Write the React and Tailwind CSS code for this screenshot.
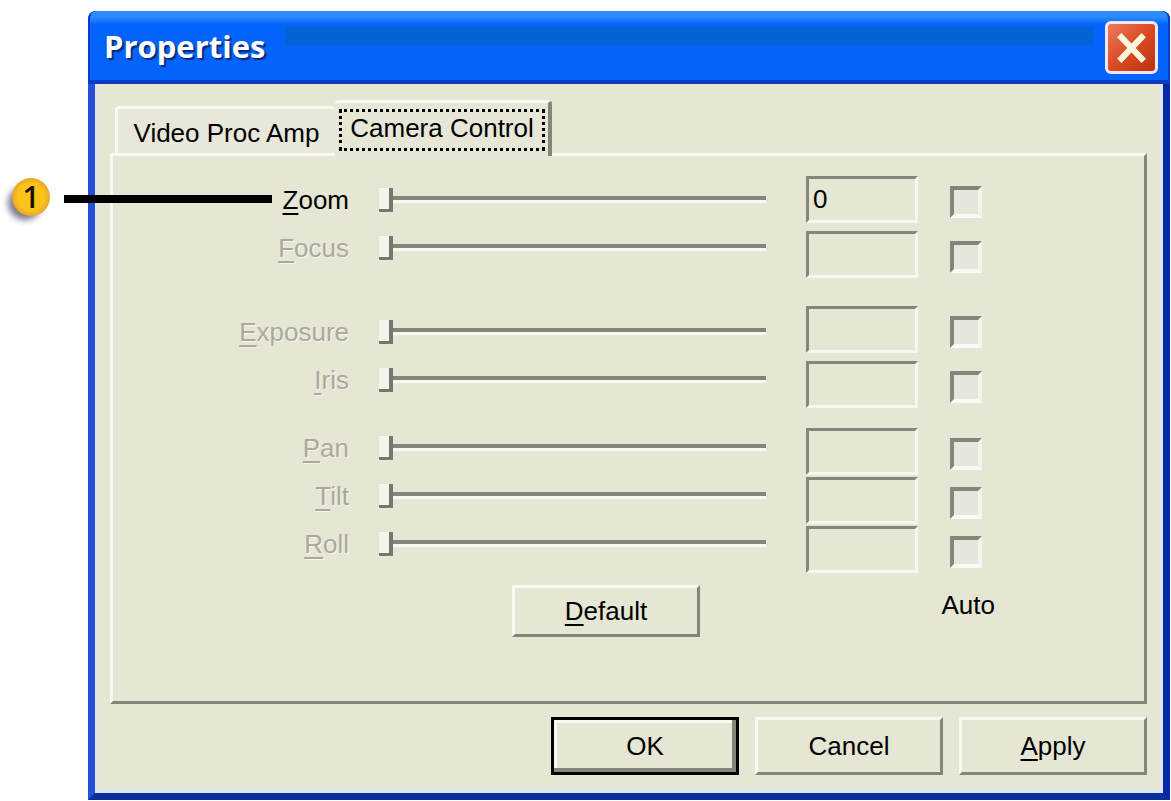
import React from "react";

const GROUPS = [
  [
    { id: "zoom", label: "Zoom", value: "0", enabled: true },
    { id: "focus", label: "Focus", value: "" },
  ],
  [
    { id: "exposure", label: "Exposure", value: "" },
    { id: "iris", label: "Iris", value: "" },
  ],
  [
    { id: "pan", label: "Pan", value: "" },
    { id: "tilt", label: "Tilt", value: "" },
    { id: "roll", label: "Roll", value: "" },
  ],
];

const LEFT_GAPS = ["", "mt-9", "mt-5"];
const RIGHT_GAPS = ["", "mt-7", "mt-5"];
const RIGHT_STEPS = ["gap-2", "gap-2", "gap-0.5"];

function Mnemonic({ text }) {
  return (
    <span>
      <span className="underline decoration-2 underline-offset-4">{text[0]}</span>
      {text.slice(1)}
    </span>
  );
}

function SliderRow({ item }) {
  return (
    <div className="flex h-12 items-center">
      <label
        htmlFor={item.id}
        className={
          item.enabled
            ? "w-[236px] shrink-0 text-right text-black"
            : "w-[236px] shrink-0 text-right text-[#aaa99c] [text-shadow:1px_1px_0_#f6f6ee]"
        }
      >
        <Mnemonic text={item.label} />
      </label>
      <input
        id={item.id}
        type="range"
        min="0"
        max="100"
        defaultValue="0"
        disabled={!item.enabled}
        className="ml-[30px] h-7 min-w-0 flex-1 appearance-none bg-transparent [background:linear-gradient(to_bottom,transparent_10px,#85857a_10px,#85857a_14px,#f8f8f2_14px,#f8f8f2_17px,transparent_17px)] [&::-webkit-slider-thumb]:h-6 [&::-webkit-slider-thumb]:w-[14px] [&::-webkit-slider-thumb]:appearance-none [&::-webkit-slider-thumb]:border-b-[3px] [&::-webkit-slider-thumb]:border-r-4 [&::-webkit-slider-thumb]:border-[#77776c] [&::-webkit-slider-thumb]:bg-[#f4f4ec]"
      />
    </div>
  );
}

function ValueRow({ item }) {
  return (
    <div className="flex items-center gap-8">
      <input
        type="text"
        aria-label={item.label + " value"}
        defaultValue={item.value}
        disabled={!item.enabled}
        className="h-[47px] w-[112px] border-[3px] border-b-[#f7f7ee] border-l-[#85857a] border-r-[#f7f7ee] border-t-[#85857a] bg-transparent px-1 text-black outline-none"
      />
      <input
        type="checkbox"
        aria-label={item.label + " auto"}
        disabled
        className="mt-1 h-8 w-8 appearance-none border-4 border-b-[#f9f9f5] border-l-[#85857a] border-r-[#f4f4ee] border-t-[#85857a] bg-[#e6e6da]"
      />
    </div>
  );
}

const BUTTON =
  "flex items-center justify-center border-[3px] border-b-[#85857a] border-l-[#f9f9f2] border-r-[#85857a] border-t-[#f9f9f2] bg-[#e5e6d3] text-black";

export default function App() {
  return (
    <div className="relative flex min-h-screen bg-white pb-px pl-[88px] pr-px pt-[11px] font-['Liberation_Sans',Arial,sans-serif] text-[26px] leading-8">
      <main className="flex min-w-0 flex-1 flex-col rounded-t-lg border-x-[7px] border-b-[7px] border-b-[#0a2f98] border-l-[#2450d6] border-r-[#0628a4] bg-[#0a3fc8]">
        <header className="-mx-[7px] flex h-[73px] items-center justify-between rounded-t-lg border-x-2 border-b-4 border-[#0a3cc4] bg-linear-to-b from-[#2c8cff] from-8% via-[#0463fb] via-20% to-[#0463fb] pl-[14px] pr-[10px]">
          <h1 className="font-['Open_Sans',sans-serif] text-[31px] font-bold leading-10 text-white [text-shadow:2px_2px_1px_#0a2a80]">
            Properties
          </h1>
          <div className="mb-5 ml-5 mr-3 h-[18px] flex-1 bg-[#0463d4]" aria-hidden="true" />
          <button
            type="button"
            aria-label="Close"
            className="mt-1 flex h-[53px] w-[53px] items-center justify-center rounded-md border-[3px] border-[#f1e6f4] bg-linear-to-br from-[#e87a5c] via-[#dc4a22] to-[#b83410]"
          >
            <svg viewBox="0 0 46 46" className="h-full w-full" aria-hidden="true">
              <path d="M11 11 L35 36 M35 11 L11 36" stroke="#fff6e0" strokeWidth="6" fill="none" />
            </svg>
          </button>
        </header>

        <div className="flex flex-1 flex-col border-x-2 border-b-4 border-[#dfe5ee] bg-[#e5e6d3] pb-[14px] pl-[13px] pr-[14px] pt-4">
          <div role="tablist" className="relative z-10 -mb-[3px] flex items-end pl-[5px]">
            <button
              type="button"
              role="tab"
              aria-selected="false"
              className="mb-[3px] h-[47px] w-[220px] rounded-t border-l-[3px] border-t-[3px] border-[#f9f9f2] bg-[#e7e7da] pt-1"
            >
              Video Proc Amp
            </button>
            <button
              type="button"
              role="tab"
              aria-selected="true"
              className="h-14 w-[217px] rounded-t border-r-4 border-t-[3px] border-r-[#85857a] border-t-[#f9f9f2] bg-[#e6e7d7] pb-[5px] pl-1 pr-[3px] pt-[6px]"
            >
              <span className="flex h-full items-center justify-center border-[3px] border-dotted border-black pb-1">
                Camera Control
              </span>
            </button>
          </div>

          <section className="flex flex-1 flex-col border-[3px] border-b-[#85857a] border-l-[#f9f9f2] border-r-[#85857a] border-t-[#f9f9f2] pt-5">
            <div className="flex items-start pr-[162px]">
              <div className="flex min-w-0 flex-1 flex-col">
                {GROUPS.map((group, i) => (
                  <div key={i} className={LEFT_GAPS[i]}>
                    {group.map((item) => (
                      <SliderRow key={item.id} item={item} />
                    ))}
                  </div>
                ))}
              </div>
              <div className="ml-10 flex flex-col">
                {GROUPS.map((group, i) => (
                  <div key={i} className={"flex flex-col " + RIGHT_GAPS[i] + " " + RIGHT_STEPS[i]}>
                    {group.map((item) => (
                      <ValueRow key={item.id} item={item} />
                    ))}
                  </div>
                ))}
              </div>
            </div>
            <div className="mt-3 flex items-start justify-between pl-[399px] pr-[149px]">
              <button type="button" className={BUTTON + " h-[52px] w-[188px]"}>
                <Mnemonic text="Default" />
              </button>
              <span className="mt-1">Auto</span>
            </div>
          </section>

          <footer className="mt-[13px] flex justify-end gap-4">
            <button
              type="button"
              className="flex h-[58px] w-[188px] items-center justify-center border-[3px] border-black bg-[#e5e6d3] shadow-[inset_-4px_-4px_0_#85857a,inset_3px_3px_0_#f9f9f2]"
            >
              OK
            </button>
            <button type="button" className={BUTTON + " h-[58px] w-[188px]"}>
              Cancel
            </button>
            <button type="button" className={BUTTON + " h-[58px] w-[188px]"}>
              <Mnemonic text="Apply" />
            </button>
          </footer>
        </div>
      </main>

      <div className="absolute left-[8px] top-[175px] z-20 flex items-center gap-3">
        <svg viewBox="0 0 44 48" className="h-12 w-11 overflow-visible" aria-hidden="true">
          <defs>
            <radialGradient id="callout" cx="50%" cy="50%" r="50%">
              <stop offset="0.7" stopColor="#fcc419" />
              <stop offset="1" stopColor="#e8a52c" />
            </radialGradient>
            <filter id="soft" x="-30%" y="-30%" width="160%" height="160%">
              <feGaussianBlur stdDeviation="3" />
            </filter>
          </defs>
          <circle cx="17" cy="28" r="17" fill="#56506a" opacity="0.75" filter="url(#soft)" />
          <circle cx="23" cy="22" r="19" fill="url(#callout)" />
          <text x="23" y="33" textAnchor="middle" fontSize="30" fontWeight="600" fontFamily="Open Sans, sans-serif" fill="#1a1400">
            1
          </text>
        </svg>
        <div className="h-2 w-[208px] bg-black" />
      </div>
    </div>
  );
}
